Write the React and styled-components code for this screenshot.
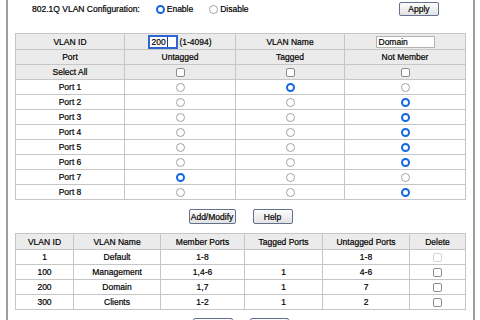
import React from 'react';
import styled, { createGlobalStyle } from 'styled-components';

const Global = createGlobalStyle`
  html, body {
    margin: 0;
    padding: 0;
    background: #fff;
  }
  body {
    font-family: "Liberation Sans", Arial, sans-serif;
    font-size: 8.5px;
    color: #000;
    -webkit-text-stroke: 0.2px #000;
    overflow: hidden;
  }
`;

const SPanel = styled.div`
  margin-left: 6px;
  width: 465px;
  min-height: 340px;
  border-left: 2px solid #9e9e9e;
  border-right: 2px solid #9e9e9e;
`;

const SConfigBar = styled.div`
  display: flex;
  align-items: center;
  height: 18px;
  padding: 0 34px 0 24px;
`;

const SLabel = styled.span`
  margin-right: 16px;
`;

const SOption = styled.label`
  display: flex;
  align-items: center;
  gap: 2px;
  margin-right: 16px;
`;

const SRadio = styled.span`
  display: inline-block;
  box-sizing: border-box;
  width: 9px;
  height: 9px;
  border-radius: 50%;
  background: #fff;
  vertical-align: middle;
  border: ${props => (props.$checked ? '2.5px solid #1268e2' : '1px solid #a2a2a2')};
`;

const SCheck = styled.span`
  display: inline-block;
  box-sizing: border-box;
  width: 9px;
  height: 9px;
  border-radius: 2px;
  background: #fff;
  vertical-align: middle;
  border: 1px solid ${props => (props.$disabled ? '#d4d4d4' : '#8c8c8c')};
`;

const SButton = styled.button`
  box-sizing: border-box;
  width: ${props => props.$w}px;
  height: ${props => props.$h || 15}px;
  padding: 0;
  font-family: inherit;
  font-size: 8.5px;
  color: #000;
  border: 1px solid #63718f;
  border-radius: 2px;
  background: linear-gradient(#fdfdfd, #e2e2e2);
`;

const SApply = styled(SButton)`
  margin-left: auto;
`;

const STable = styled.table`
  border-collapse: collapse;
  table-layout: fixed;
  width: 450px;
  margin: ${props => props.$mt}px auto 0;
`;

const SCol = styled.col`
  width: ${props => props.$w}px;
`;

const SRow = styled.tr`
  height: ${props => props.$h || 15}px;
`;

const SCell = styled.td`
  border: 1px solid #c6c6c6;
  padding: 0;
  text-align: center;
  vertical-align: middle;
  white-space: nowrap;
  background: ${props => (props.$head ? '#ebebeb' : '#fff')};
`;

const SIdField = styled.span`
  display: inline-flex;
  align-items: center;
  box-sizing: border-box;
  width: 30px;
  height: 14px;
  padding-left: 1px;
  border: 2px solid #2b66d2;
  background: #fff;
  vertical-align: middle;
  text-align: left;
`;

const SCaret = styled.span`
  display: inline-block;
  width: 1px;
  height: 10px;
  margin-left: 1px;
  background: #1d3f86;
`;

const SRange = styled.span`
  margin-left: 1px;
  vertical-align: middle;
`;

const SNameField = styled.span`
  display: inline-block;
  box-sizing: border-box;
  width: 59px;
  height: 12px;
  line-height: 10px;
  padding-left: 2px;
  border: 1px solid #b3b3b3;
  background: #fff;
  text-align: left;
  vertical-align: middle;
`;

const SActions = styled.div`
  display: flex;
  justify-content: center;
  gap: 17px;
  margin-top: ${props => props.$mt}px;
`;

const ports = [
  { name: 'Port 1', mode: 1 },
  { name: 'Port 2', mode: 2 },
  { name: 'Port 3', mode: 2 },
  { name: 'Port 4', mode: 2 },
  { name: 'Port 5', mode: 2 },
  { name: 'Port 6', mode: 2 },
  { name: 'Port 7', mode: 0 },
  { name: 'Port 8', mode: 2 },
];

const vlans = [
  { id: '1', name: 'Default', member: '1-8', tagged: '', untagged: '1-8', locked: true },
  { id: '100', name: 'Management', member: '1,4-6', tagged: '1', untagged: '4-6' },
  { id: '200', name: 'Domain', member: '1,7', tagged: '1', untagged: '7' },
  { id: '300', name: 'Clients', member: '1-2', tagged: '1', untagged: '2' },
];

const App = () => {
  return (
    <>
      <Global />
      <SPanel>
        <SConfigBar>
          <SLabel>802.1Q VLAN Configuration:</SLabel>
          <SOption>
            <SRadio $checked />
            Enable
          </SOption>
          <SOption>
            <SRadio />
            Disable
          </SOption>
          <SApply $w={40} $h={14}>Apply</SApply>
        </SConfigBar>

        <STable $mt={15}>
          <colgroup>
            <SCol $w={109} />
            <SCol $w={111} />
            <SCol $w={109} />
            <SCol $w={121} />
          </colgroup>
          <tbody>
            <SRow $h={16}>
              <SCell $head>VLAN ID</SCell>
              <SCell $head>
                <SIdField>
                  200
                  <SCaret />
                </SIdField>
                <SRange>(1-4094)</SRange>
              </SCell>
              <SCell $head>VLAN Name</SCell>
              <SCell $head>
                <SNameField>Domain</SNameField>
              </SCell>
            </SRow>
            <SRow>
              <SCell $head>Port</SCell>
              <SCell $head>Untagged</SCell>
              <SCell $head>Tagged</SCell>
              <SCell $head>Not Member</SCell>
            </SRow>
            <SRow>
              <SCell $head>Select All</SCell>
              <SCell $head><SCheck /></SCell>
              <SCell $head><SCheck /></SCell>
              <SCell $head><SCheck /></SCell>
            </SRow>
            {ports.map(port => (
              <SRow key={port.name}>
                <SCell>{port.name}</SCell>
                {[0, 1, 2].map(m => (
                  <SCell key={m}>
                    <SRadio $checked={port.mode === m} />
                  </SCell>
                ))}
              </SRow>
            ))}
          </tbody>
        </STable>

        <SActions $mt={9}>
          <SButton $w={47}>Add/Modify</SButton>
          <SButton $w={40}>Help</SButton>
        </SActions>

        <STable $mt={9}>
          <colgroup>
            <SCol $w={58} />
            <SCol $w={87} />
            <SCol $w={84} />
            <SCol $w={78} />
            <SCol $w={87} />
            <SCol $w={56} />
          </colgroup>
          <tbody>
            <SRow $h={16}>
              <SCell $head>VLAN ID</SCell>
              <SCell $head>VLAN Name</SCell>
              <SCell $head>Member Ports</SCell>
              <SCell $head>Tagged Ports</SCell>
              <SCell $head>Untagged Ports</SCell>
              <SCell $head>Delete</SCell>
            </SRow>
            {vlans.map(v => (
              <SRow key={v.id}>
                <SCell>{v.id}</SCell>
                <SCell>{v.name}</SCell>
                <SCell>{v.member}</SCell>
                <SCell>{v.tagged}</SCell>
                <SCell>{v.untagged}</SCell>
                <SCell>
                  <SCheck $disabled={v.locked} />
                </SCell>
              </SRow>
            ))}
          </tbody>
        </STable>

        {/* second button pair sits just past the bottom edge; only its tops show */}
        <SActions $mt={8}>
          <SButton $w={40} aria-label="Delete" />
          <SButton $w={39} aria-label="Help" />
        </SActions>
      </SPanel>
    </>
  );
};

export default App;
